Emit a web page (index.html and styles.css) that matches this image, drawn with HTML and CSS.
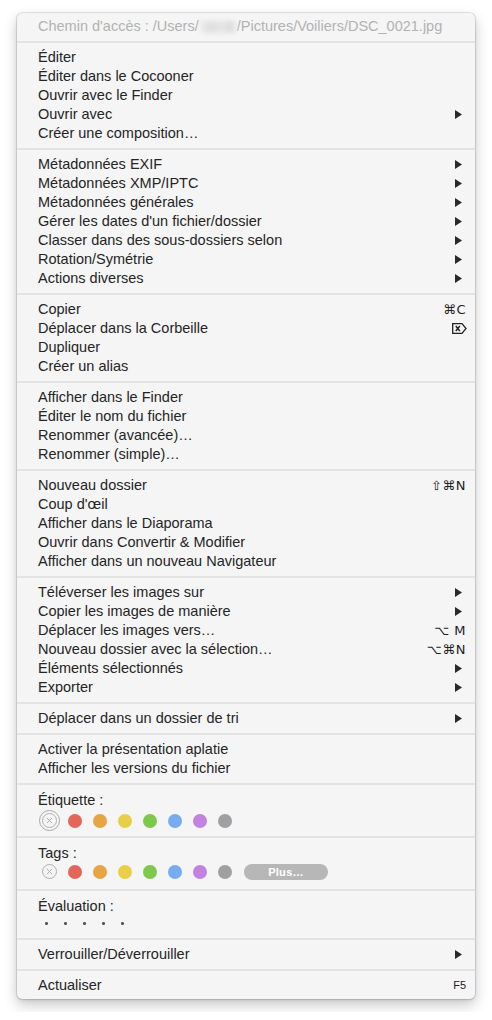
FILE: index.html
```html
<!DOCTYPE html>
<html lang="fr">
<head>
<meta charset="utf-8">
<title>Menu contextuel</title>
<link rel="stylesheet" href="styles.css">
</head>
<body>
<div class="screen">
  <div class="menu">
    <div class="item header"><span>Chemin d'accès : /Users/</span><span class="blur"></span><span>/Pictures/Voiliers/DSC_0021.jpg</span></div>
    <div class="sep"></div>

    <div class="item"><span>Éditer</span></div>
    <div class="item"><span>Éditer dans le Cocooner</span></div>
    <div class="item"><span>Ouvrir avec le Finder</span></div>
    <div class="item"><span>Ouvrir avec</span><svg class="arrow" viewBox="0 0 7 9"><path d="M0 0 L7 4.5 L0 9 Z"/></svg></div>
    <div class="item"><span>Créer une composition…</span></div>
    <div class="sep"></div>

    <div class="item"><span>Métadonnées EXIF</span><svg class="arrow" viewBox="0 0 7 9"><path d="M0 0 L7 4.5 L0 9 Z"/></svg></div>
    <div class="item"><span>Métadonnées XMP/IPTC</span><svg class="arrow" viewBox="0 0 7 9"><path d="M0 0 L7 4.5 L0 9 Z"/></svg></div>
    <div class="item"><span>Métadonnées générales</span><svg class="arrow" viewBox="0 0 7 9"><path d="M0 0 L7 4.5 L0 9 Z"/></svg></div>
    <div class="item"><span>Gérer les dates d'un fichier/dossier</span><svg class="arrow" viewBox="0 0 7 9"><path d="M0 0 L7 4.5 L0 9 Z"/></svg></div>
    <div class="item"><span>Classer dans des sous-dossiers selon</span><svg class="arrow" viewBox="0 0 7 9"><path d="M0 0 L7 4.5 L0 9 Z"/></svg></div>
    <div class="item"><span>Rotation/Symétrie</span><svg class="arrow" viewBox="0 0 7 9"><path d="M0 0 L7 4.5 L0 9 Z"/></svg></div>
    <div class="item"><span>Actions diverses</span><svg class="arrow" viewBox="0 0 7 9"><path d="M0 0 L7 4.5 L0 9 Z"/></svg></div>
    <div class="sep"></div>

    <div class="item"><span>Copier</span><span class="key">⌘C</span></div>
    <div class="item"><span>Déplacer dans la Corbeille</span><svg class="del" viewBox="0 0 15 11"><path d="M0.7 0.7 H10 L14 5.5 L10 10.3 H0.7 Z" fill="none" stroke="#222" stroke-width="1.3"/><path d="M3.8 3 L7.8 8 M7.8 3 L3.8 8" stroke="#222" stroke-width="1.5"/></svg></div>
    <div class="item"><span>Dupliquer</span></div>
    <div class="item"><span>Créer un alias</span></div>
    <div class="sep"></div>

    <div class="item"><span>Afficher dans le Finder</span></div>
    <div class="item"><span>Éditer le nom du fichier</span></div>
    <div class="item"><span>Renommer (avancée)…</span></div>
    <div class="item"><span>Renommer (simple)…</span></div>
    <div class="sep"></div>

    <div class="item"><span>Nouveau dossier</span><span class="key">⇧⌘N</span></div>
    <div class="item"><span>Coup d'œil</span></div>
    <div class="item"><span>Afficher dans le Diaporama</span></div>
    <div class="item"><span>Ouvrir dans Convertir &amp; Modifier</span></div>
    <div class="item"><span>Afficher dans un nouveau Navigateur</span></div>
    <div class="sep"></div>

    <div class="item"><span>Téléverser les images sur</span><svg class="arrow" viewBox="0 0 7 9"><path d="M0 0 L7 4.5 L0 9 Z"/></svg></div>
    <div class="item"><span>Copier les images de manière</span><svg class="arrow" viewBox="0 0 7 9"><path d="M0 0 L7 4.5 L0 9 Z"/></svg></div>
    <div class="item"><span>Déplacer les images vers…</span><span class="key">⌥ M</span></div>
    <div class="item"><span>Nouveau dossier avec la sélection…</span><span class="key">⌥⌘N</span></div>
    <div class="item"><span>Éléments sélectionnés</span><svg class="arrow" viewBox="0 0 7 9"><path d="M0 0 L7 4.5 L0 9 Z"/></svg></div>
    <div class="item"><span>Exporter</span><svg class="arrow" viewBox="0 0 7 9"><path d="M0 0 L7 4.5 L0 9 Z"/></svg></div>
    <div class="sep"></div>

    <div class="item"><span>Déplacer dans un dossier de tri</span><svg class="arrow" viewBox="0 0 7 9"><path d="M0 0 L7 4.5 L0 9 Z"/></svg></div>
    <div class="sep"></div>

    <div class="item"><span>Activer la présentation aplatie</span></div>
    <div class="item"><span>Afficher les versions du fichier</span></div>
    <div class="sep"></div>

    <div class="block">
      <div class="item"><span>Étiquette :</span></div>
      <div class="swatches big">
        <span class="slot"><span class="none-ring"><span class="none"><svg viewBox="0 0 8 8"><path d="M1 1 L7 7 M7 1 L1 7"/></svg></span></span></span>
        <span class="slot"><span class="dot red"></span></span>
        <span class="slot"><span class="dot orange"></span></span>
        <span class="slot"><span class="dot yellow"></span></span>
        <span class="slot"><span class="dot green"></span></span>
        <span class="slot"><span class="dot blue"></span></span>
        <span class="slot"><span class="dot purple"></span></span>
        <span class="slot"><span class="dot gray"></span></span>
      </div>
    </div>
    <div class="sep"></div>

    <div class="block tags">
      <div class="item"><span>Tags :</span></div>
      <div class="swatches">
        <span class="slot"><span class="none"><svg viewBox="0 0 8 8"><path d="M1 1 L7 7 M7 1 L1 7"/></svg></span></span>
        <span class="slot"><span class="dot red"></span></span>
        <span class="slot"><span class="dot orange"></span></span>
        <span class="slot"><span class="dot yellow"></span></span>
        <span class="slot"><span class="dot green"></span></span>
        <span class="slot"><span class="dot blue"></span></span>
        <span class="slot"><span class="dot purple"></span></span>
        <span class="slot"><span class="dot gray"></span></span>
        <span class="plus">Plus…</span>
      </div>
    </div>
    <div class="sep"></div>

    <div class="block">
      <div class="item"><span>Évaluation :</span></div>
      <div class="stars">
        <span class="star"></span><span class="star"></span><span class="star"></span><span class="star"></span><span class="star"></span>
      </div>
    </div>
    <div class="sep"></div>

    <div class="item"><span>Verrouiller/Déverrouiller</span><svg class="arrow" viewBox="0 0 7 9"><path d="M0 0 L7 4.5 L0 9 Z"/></svg></div>
    <div class="sep"></div>

    <div class="item"><span>Actualiser</span><span class="key fkey">F5</span></div>
  </div>
</div>
</body>
</html>
```

FILE: styles.css
```css
html, body {
  margin: 0;
  padding: 0;
  background: #ffffff;
}

.screen {
  padding: 13px 17px;
}

.menu {
  background: #f5f5f5;
  border-radius: 5px;
  box-shadow: 0 0 0 0.5px rgba(0, 0, 0, 0.18), 0 6px 14px rgba(0, 0, 0, 0.22), 0 1px 3px rgba(0, 0, 0, 0.12);
  padding: 4px 0;
  font-family: "Liberation Sans", Arial, sans-serif;
  font-size: 14.5px;
  color: #252525;
}

.item {
  height: 19px;
  line-height: 19px;
  display: flex;
  align-items: center;
  justify-content: space-between;
  padding: 0 13px 0 21px;
  white-space: nowrap;
}

.header {
  color: #b2b2b2;
  justify-content: flex-start;
}

.blur {
  display: inline-block;
  width: 36px;
  height: 12px;
  margin: 0 1px;
  background: linear-gradient(90deg, #ececec, #dedede 30%, #e6e6e6 60%, #dcdcdc 85%, #ebebeb);
  filter: blur(2px);
}

.sep {
  height: 2px;
  background: #e3e3e3;
  margin: 5px 0;
}

.arrow {
  width: 7px;
  height: 9px;
  fill: #2a2a2a;
}

.key {
  font-family: "DejaVu Sans", "Liberation Sans", sans-serif;
  font-size: 13px;
  margin-right: -4px;
  letter-spacing: 0.5px;
  color: #222;
}

.fkey {
  font-family: "Liberation Sans", Arial, sans-serif;
  font-size: 11px;
  letter-spacing: 0;
}

.del {
  width: 15px;
  height: 11px;
  margin-right: -5px;
}

.block {
  padding-top: 1px;
}

.swatches {
  display: flex;
  align-items: center;
  height: 17px;
  padding-left: 20px;
}

.swatches.big {
  height: 21px;
}

.tags {
  padding-bottom: 4px;
}

.slot {
  width: 25px;
  display: flex;
  justify-content: center;
  align-items: center;
}

.dot {
  width: 14px;
  height: 14px;
  border-radius: 50%;
}

.red { background: #e4655a; }
.orange { background: #e6a444; }
.yellow { background: #e8cf48; }
.green { background: #7ec84b; }
.blue { background: #78acf1; }
.purple { background: #c482df; }
.gray { background: #a0a0a3; }

.none-ring {
  width: 19px;
  height: 19px;
  border: 1px solid #a9a9a9;
  border-radius: 50%;
  display: flex;
  align-items: center;
  justify-content: center;
}

.none {
  width: 13px;
  height: 13px;
  border: 1px solid #b0b0b0;
  border-radius: 50%;
  display: flex;
  align-items: center;
  justify-content: center;
}

.none svg {
  width: 7px;
  height: 7px;
  stroke: #a8a8a8;
  stroke-width: 1;
  fill: none;
}

.plus {
  margin-left: 7px;
  width: 84px;
  height: 16px;
  border-radius: 8px;
  background: #b7b7b7;
  color: #ffffff;
  font-size: 11px;
  font-weight: bold;
  line-height: 16px;
  text-align: center;
  letter-spacing: 0.3px;
}

.stars {
  display: flex;
  align-items: center;
  height: 15px;
  padding-left: 20px;
  padding-bottom: 2px;
}

.star {
  width: 19px;
  display: flex;
  justify-content: center;
}

.star::before {
  content: "";
  width: 2.5px;
  height: 2.5px;
  border-radius: 50%;
  background: #555;
}
```
